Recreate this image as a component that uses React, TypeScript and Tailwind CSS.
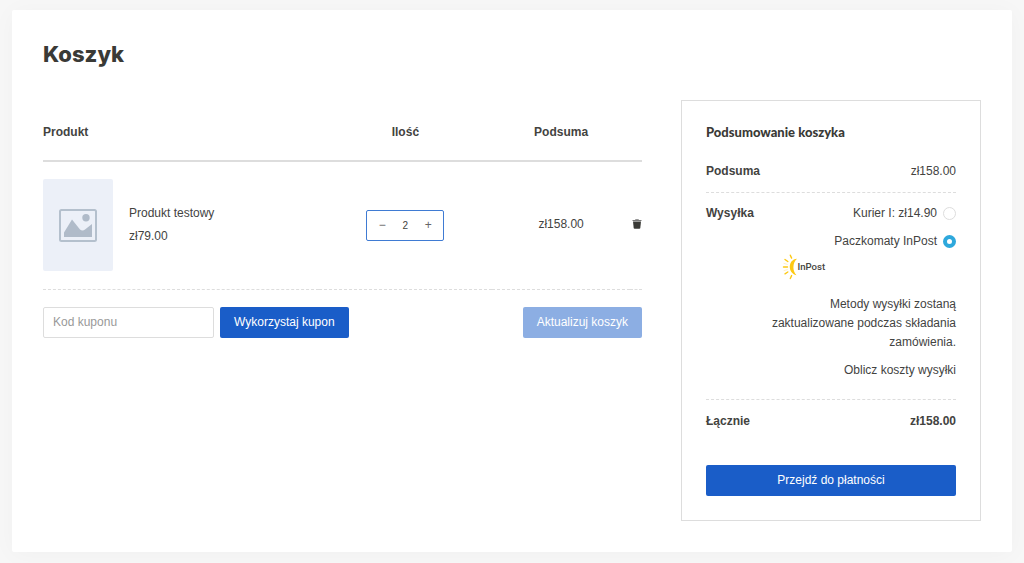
import { useState } from "react";

function PlaceholderImage() {
  return (
    <div className="flex h-[92px] w-[70px] shrink-0 items-center justify-center rounded-xs bg-[#ecf0f8]">
      <svg viewBox="0 0 38 33" className="h-[33px] w-[38px]" aria-hidden="true">
        <rect x="1" y="1" width="36" height="31" rx="1.5" fill="none" stroke="#b4c0cd" strokeWidth="2" />
        <path d="M5 28V23.500L13 10.500L21 20.500Q23.500 22.500 26 20.500L33 15V28Z" fill="#b0bbc9" />
        <circle cx="27" cy="8.700" r="3.700" fill="#b0bbc9" />
      </svg>
    </div>
  );
}

function TrashIcon() {
  return (
    <svg viewBox="0 0 10 10" className="h-[10px] w-[10px]" aria-hidden="true">
      <path d="M0.500 0.900H3L3.500 0.200H6.500L7 0.900H9.500V2H0.500Z" fill="#777" />
      <path d="M1 2.400H9L8.300 9Q8.200 9.800 7.400 9.800H2.600Q1.800 9.800 1.700 9Z" fill="#3a3a36" />
    </svg>
  );
}

function InPostLogo() {
  return (
    <svg viewBox="0 0 44 26" className="h-[26px] w-[44px]" role="img" aria-label="InPost">
      <path d="M15 4.800C5.500 5.500 5.500 19.500 14.500 21.200C10.500 17.500 10.200 9 15 4.800Z" fill="#fdc913" />
      <g stroke="#fdc913" strokeWidth="1.400" strokeLinecap="round">
        <path d="M8.300 1.200L9.600 4.100M3 5.500L5.800 7.500M1.500 13H5.500M3 19.800L5.800 18M8.300 24.500L9.600 21.600" />
        <path d="M2 9.400L5.300 10.400M2 16.600L5.300 15.600" strokeWidth="0.600" opacity="0.400" />
      </g>
      <text x="15.500" y="16.400" fontSize="9.600" fontFamily="Roboto, sans-serif" fontWeight="500" fill="#454540">
        InPost
      </text>
    </svg>
  );
}

function ShippingOption({ id, label, checked, onSelect }: { id: string; label: string; checked: boolean; onSelect: () => void }) {
  return (
    <div className="flex items-center justify-end gap-[6px]">
      <label htmlFor={id}>{label}</label>
      <input
        id={id}
        type="radio"
        name="shipping"
        checked={checked}
        onChange={onSelect}
        className="size-[13px] appearance-none rounded-full border border-[#ddd] bg-white checked:border-4 checked:border-[#2ea8dc]"
      />
    </div>
  );
}

export default function App() {
  const [quantity, setQuantity] = useState(2);
  const [shipping, setShipping] = useState("inpost");

  return (
    <div className="min-h-screen bg-[#f7f7f7] px-3 pt-[10px] pb-[11px] font-['Liberation_Sans',Arial,sans-serif] text-xs text-[#43433f]">
      <main className="rounded-xs bg-white px-[31px] pt-7 pb-[31px] shadow-[0_2px_24px_rgba(0,0,0,0.03)]">
        <h1 className="font-['Inter',sans-serif] text-[22px] leading-8 font-extrabold text-[#3a3a36]">Koszyk</h1>

        <div className="mt-[30px] flex items-start gap-[39px]">
          <form className="min-w-0 flex-1" onSubmit={(e) => e.preventDefault()}>
            <table className="w-full table-fixed border-collapse">
              <thead>
                <tr className="h-[61px] border-b-2 border-[#ddd]">
                  <th className="w-[46%] pt-1 text-left">Produkt</th>
                  <th className="w-[29%] pt-1">Ilość</th>
                  <th className="w-[23%] pt-1">Podsuma</th>
                  <th aria-label="Usuń" />
                </tr>
              </thead>
              <tbody>
                <tr className="h-32 border-b border-dashed border-[#ddd]">
                  <td>
                    <div className="flex items-center gap-4">
                      <PlaceholderImage />
                      <div className="leading-[23px]">
                        <a href="#produkt" className="block">Produkt testowy</a>
                        <span>zł79.00</span>
                      </div>
                    </div>
                  </td>
                  <td>
                    <div className="mx-auto flex h-[31px] w-[78px] items-center rounded-xs border border-[#3f7bd3] text-[10px]">
                      <button type="button" aria-label="Zmniejsz" className="w-[30px] text-center text-xs text-[#666]" onClick={() => setQuantity(Math.max(1, quantity - 1))}>−</button>
                      <input
                        aria-label="Ilość"
                        value={quantity}
                        onChange={(e) => setQuantity(Number(e.target.value) || 1)}
                        className="w-4 min-w-0 text-center outline-none"
                      />
                      <button type="button" aria-label="Zwiększ" className="w-[30px] text-center text-xs text-[#666]" onClick={() => setQuantity(quantity + 1)}>+</button>
                    </div>
                  </td>
                  <td className="pb-[3px] text-center">zł158.00</td>
                  <td className="pb-[3px]">
                    <button type="button" aria-label="Usuń produkt" className="ml-auto block">
                      <TrashIcon />
                    </button>
                  </td>
                </tr>
              </tbody>
            </table>

            <div className="mt-[17px] flex items-center justify-between">
              <div className="flex gap-[6px]">
                <input
                  aria-label="Kod kuponu"
                  placeholder="Kod kuponu"
                  className="h-[31px] w-[171px] rounded-xs border border-[#ddd] px-[9px] placeholder:text-[#999]"
                />
                <button type="submit" className="h-[31px] rounded-xs bg-[#1a5dc8] px-[14px] text-white">Wykorzystaj kupon</button>
              </div>
              <button type="submit" disabled className="h-[31px] rounded-xs bg-[#8caee3] px-[14px] text-white">Aktualizuj koszyk</button>
            </div>
          </form>

          <aside className="w-[300px] shrink-0 border border-[#ddd] p-6">
            <h2 className="font-['Lato',sans-serif] text-[13px] leading-[14px] font-black text-[#3a3a36]">Podsumowanie koszyka</h2>
            <dl className="mt-[22px]">
              <div className="flex justify-between border-b border-dashed border-[#ddd] pb-[11px] leading-5">
                <dt className="font-bold">Podsuma</dt>
                <dd>zł158.00</dd>
              </div>
              <div className="flex justify-between border-b border-dashed border-[#ddd] pt-[11px] pb-[19px] leading-[19px]">
                <dt className="font-bold">Wysyłka</dt>
                <dd className="w-[190px] text-right">
                  <ShippingOption id="kurier" label="Kurier I: zł14.90" checked={shipping === "kurier"} onSelect={() => setShipping("kurier")} />
                  <div className="mt-[9px]">
                    <ShippingOption id="inpost" label="Paczkomaty InPost" checked={shipping === "inpost"} onSelect={() => setShipping("inpost")} />
                  </div>
                  <div className="mt-[3px] ml-4">
                    <InPostLogo />
                  </div>
                  <p className="mt-[15px]">Metody wysyłki zostaną zaktualizowane podczas składania zamówienia.</p>
                  <a href="#koszty" className="mt-[9px] block">Oblicz koszty wysyłki</a>
                </dd>
              </div>
              <div className="flex justify-between pt-[11px] leading-5 font-bold">
                <dt>Łącznie</dt>
                <dd>zł158.00</dd>
              </div>
            </dl>
            <a href="#platnosc" className="mt-[34px] block h-[31px] rounded-xs bg-[#1a5dc8] text-center leading-[30px] text-white">
              Przejdź do płatności
            </a>
          </aside>
        </div>
      </main>
    </div>
  );
}
